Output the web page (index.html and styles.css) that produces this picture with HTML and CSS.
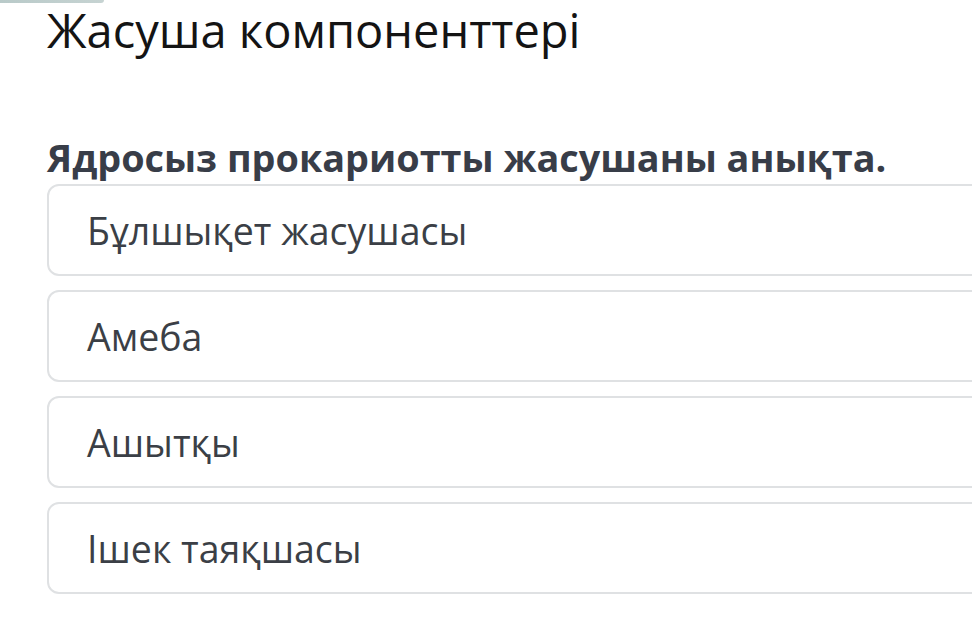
FILE: index.html
```html
<!DOCTYPE html>
<html lang="kk">
<head>
    <meta charset="UTF-8">
    <meta name="viewport" content="width=device-width, initial-scale=1.0">
    <title>Жасуша компоненттері</title>
    <link rel="stylesheet" href="styles.css">
</head>
<body>
    <div class="top-strip"></div>

    <div class="quiz">
        <h1 class="quiz-title">Жасуша компоненттері</h1>

        <h2 class="question">Ядросыз прокариотты жасушаны анықта.</h2>

        <!-- Answer options -->
        <div class="options">
            <div class="option">Бұлшықет жасушасы</div>
            <div class="option">Амеба</div>
            <div class="option">Ашытқы</div>
            <div class="option">Ішек таяқшасы</div>
        </div>
    </div>
</body>
</html>
```

FILE: styles.css
```css
/* General */
* {
    margin: 0;
    padding: 0;
    box-sizing: border-box;
}

body {
    background: #ffffff;
    font-family: "Open Sans", "Noto Sans", sans-serif;
    overflow: hidden;
    position: relative;
}

/* little tab bar at the very top */
.top-strip {
    position: absolute;
    left: 0;
    top: 0;
    width: 104px;
    height: 3px;
    background: linear-gradient(90deg, #b9cac9, #c6d3d2);
    border-bottom-right-radius: 3px;
}

.quiz {
    padding: 2px 0 0 47px;
    width: 1000px;
}

.quiz-title {
    font-size: 47px;
    font-weight: 400;
    line-height: 56px;
    color: #141414;
}

.question {
    font-size: 37.8px;
    font-weight: 700;
    line-height: 48px;
    color: #383d48;
    margin-top: 76px;
}

/* Options */
.options {
    display: flex;
    flex-direction: column;
    gap: 14px;
    margin-top: 2px;
}

.option {
    height: 92px;
    border: 2px solid #dfe1e3;
    border-radius: 12px;
    padding: 0 38px;
    display: flex;
    align-items: center;
    font-size: 37.5px;
    color: #3b3f46;
}
```
